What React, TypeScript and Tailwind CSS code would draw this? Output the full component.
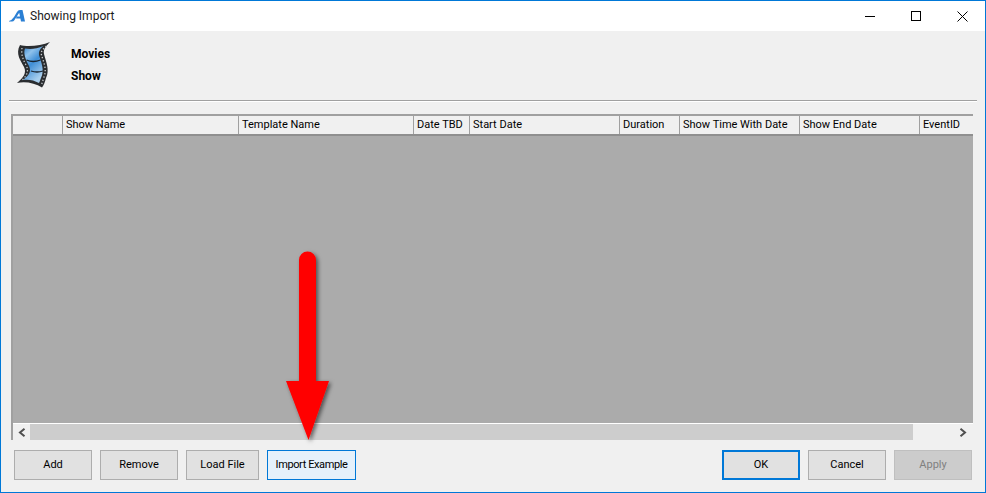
import React from 'react';

const columns = [
  { label: '', width: 'w-[50px]' },
  { label: 'Show Name', width: 'w-[176px]' },
  { label: 'Template Name', width: 'w-[175px]' },
  { label: 'Date TBD', width: 'w-[56px]' },
  { label: 'Start Date', width: 'w-[150px]' },
  { label: 'Duration', width: 'w-[60px]' },
  { label: 'Show Time With Date', width: 'w-[120px]' },
  { label: 'Show End Date', width: 'w-[120px]' },
  { label: 'EventID', width: 'flex-1' },
];

const AppLogo = () => (
  <svg width="17" height="12" viewBox="0 0 17 12" className="ml-[8px]">
    <path d="M0 11 Q3 10 5 7 L8 2 Q9 0 11 0 L13.5 0 L16 11.5 L12 11.5 L11.4 8.5 L7 8.5 L7.8 6.4 L11 6.4 L10.2 2.8 L5.5 10 Q4.5 11.5 3 11.5 L0 11.5 Z" fill="#2a7fd4" />
  </svg>
);

const FilmIcon = () => (
  <svg width="40" height="50" viewBox="0 0 40 50" className="ml-[6px] mt-[9px]">
    <defs>
      <linearGradient id="film" x1="0" y1="0" x2="0.5" y2="1">
        <stop offset="0" stopColor="#2f7cc8" />
        <stop offset="0.28" stopColor="#8fc2ec" />
        <stop offset="0.55" stopColor="#3f8ed6" />
        <stop offset="1" stopColor="#a9cfee" />
      </linearGradient>
    </defs>
    <path d="M5 5 C12 7 26 6 35 2 C30 7 28 10 29 14 C31 22 35 30 31 38 C30 42 29 45 27 47.5 C20 43 10 41 2 43 C8 38 12 33 9 27 C6 21 0 14 5 5 Z" fill="#2a2d30" />
    <path d="M10 8.5 C15 9.5 22 9 28.5 6 C25 9 23.5 11 24 15 C26 22 30 30 26 38 C25 40 25 41.5 24 43 C19 40 13 39 8 40 C13 36 17 32 14 26 C11 20 8 14 10 8.5 Z" fill="url(#film)" />
    <path d="M11.5 20 Q18 23 25.5 20 M16 31 Q22 33 28 31" stroke="#1a2530" strokeWidth="1.3" fill="none" />
    <path d="M7 8 C6 14 8 20 11.5 26 C14 32 11 37 6 41 M31.5 6 C27 10 25.5 12 26.5 15 C28.5 22 32.5 30 28.5 38 C28 41 27 43 26.5 45" stroke="#c9ced2" strokeWidth="1.3" strokeDasharray="1.3 2" fill="none" />
  </svg>
);

const ScrollArrow = ({ dir }: { dir: 'left' | 'right' }) => (
  <svg width="8" height="9" viewBox="0 0 8 9">
    <path d={dir === 'left' ? 'M6.5 0.8 L2 4.5 L6.5 8.2' : 'M1.5 0.8 L6 4.5 L1.5 8.2'} stroke="#505050" strokeWidth="2" fill="none" />
  </svg>
);

const DialogButton = ({ label, width, variant = 'normal', tight = false }: { label: string; width: string; variant?: 'normal' | 'hover' | 'default' | 'disabled'; tight?: boolean }) => {
  const styles = {
    normal: 'border border-[#adadad] bg-[#e1e1e1] text-black',
    hover: 'border border-[#0078d7] bg-[#e5f1fb] text-black',
    default: 'border-2 border-[#0078d7] bg-[#e1e1e1] text-black',
    disabled: 'border border-[#bfbfbf] bg-[#cccccc] text-[#808080]',
  };
  return (
    <button className={`${width} h-[30px] flex items-center justify-center shrink-0 whitespace-nowrap text-[11px] ${tight ? 'tracking-[-0.4px]' : ''} ${styles[variant]}`}>
      {label}
    </button>
  );
};

export default function App() {
  return (
    <div className="relative w-[986px] h-[493px] overflow-hidden flex flex-col bg-[#f0f0f0] border border-[#0078d7] text-[12px] text-black font-['Roboto','Liberation_Sans',sans-serif]">
      {/* title bar */}
      <div className="h-[30px] bg-white flex items-center shrink-0">
        <AppLogo />
        <span className="ml-[4px] text-[#1a1a1a]">Showing Import</span>
        <div className="ml-auto flex items-center">
          <div className="w-[46px] h-[30px] flex items-center justify-center">
            <div className="w-[10px] h-px bg-black" />
          </div>
          <div className="w-[46px] h-[30px] flex items-center justify-center">
            <div className="w-[10px] h-[10px] border border-black" />
          </div>
          <div className="w-[46px] h-[30px] flex items-center justify-center">
            <svg width="11" height="11" viewBox="0 0 11 11">
              <path d="M0.5 0.5 L10.5 10.5 M10.5 0.5 L0.5 10.5" stroke="#000" strokeWidth="1" />
            </svg>
          </div>
        </div>
      </div>

      {/* header */}
      <div className="h-[69px] flex shrink-0 ml-[8px]">
        <FilmIcon />
        <div className="ml-[16px] pt-[15px] flex flex-col gap-[6px] font-bold leading-[16px]">
          <span>Movies</span>
          <span>Show</span>
        </div>
      </div>
      <div className="h-px bg-[#a0a0a0] mx-[8px] shrink-0 border-b border-white box-content" />

      {/* grid */}
      <div className="mt-[12px] ml-[10px] mr-[12px] h-[326px] flex flex-col border-l-2 border-t-2 border-[#a0a0a0] shrink-0">
        <div className="h-[18px] flex bg-[#f0f0f0] shrink-0 text-[11px]">
          {columns.map((col, i) => (
            <div key={i} className={`${col.width} h-full pl-[3px] pt-[1px] flex items-center border-r border-[#a0a0a0] last:border-r-0 whitespace-nowrap overflow-hidden`}>
              {col.label}
            </div>
          ))}
        </div>
        <div className="flex-1 bg-[#ababab] border-t-2 border-[#8f8f8f]" />
        <div className="h-[17px] flex items-center bg-[#f0f0f0] border-t border-white shrink-0">
          <div className="w-[17px] flex justify-center">
            <ScrollArrow dir="left" />
          </div>
          <div className="w-[883px] h-full bg-[#cdcdcd]" />
          <div className="flex-1 flex justify-end pr-[6px]">
            <ScrollArrow dir="right" />
          </div>
        </div>
      </div>

      {/* buttons */}
      <div className="mt-[10px] mx-[13px] flex gap-[8px]">
        <DialogButton label="Add" width="w-[78px]" />
        <DialogButton label="Remove" width="w-[78px]" />
        <DialogButton label="Load File" width="w-[73px]" />
        <DialogButton label="Import Example" width="w-[89px]" variant="hover" tight />
        <div className="flex-1" />
        <DialogButton label="OK" width="w-[78px]" variant="default" />
        <DialogButton label="Cancel" width="w-[78px]" />
        <DialogButton label="Apply" width="w-[78px]" variant="disabled" />
      </div>

      {/* annotation arrow */}
      <svg width="60" height="205" viewBox="0 0 60 205" className="absolute left-[274px] top-[244px] pointer-events-none">
        <defs>
          <filter id="arrowShadow" x="-30%" y="-10%" width="160%" height="120%">
            <feDropShadow dx="2" dy="2" stdDeviation="2" floodColor="#000" floodOpacity="0.55" />
          </filter>
        </defs>
        <path d="M24 136 L24 15 A8.5 8.5 0 0 1 41 15 L41 136 L54 136 L33.5 195 L11 136 Z" fill="#ff0000" filter="url(#arrowShadow)" />
      </svg>
    </div>
  );
}
